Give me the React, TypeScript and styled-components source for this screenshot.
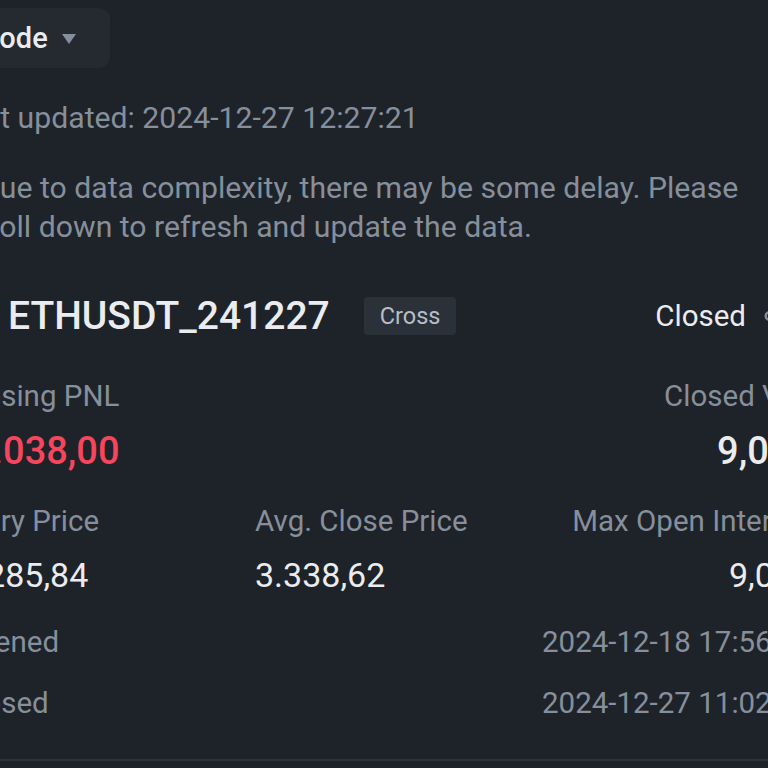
import React from "react";
import styled, { createGlobalStyle } from "styled-components";
import { Share2 } from "lucide-react";

const GlobalStyle = createGlobalStyle`
  html, body {
    margin: 0;
    padding: 0;
    background: #1e2329;
    overflow: hidden;
  }
  body {
    font-family: Roboto, "Noto Sans", "Liberation Sans", sans-serif;
    color: #eaecef;
    width: 768px;
    height: 768px;
  }
`;

const Page = styled.div`
  width: 854px;
  margin-left: -42px;
  padding-top: 8px;
  display: flex;
  flex-direction: column;
`;

const ModeButton = styled.button`
  align-self: flex-start;
  height: 60px;
  display: flex;
  align-items: center;
  gap: 14px;
  margin-left: -20px;
  padding: 0 34px 0 36px;
  border: none;
  border-radius: 12px;
  background: #252a31;
  color: #eaecef;
  font-family: inherit;
  font-size: 29px;
  font-weight: 500;
`;

const Caret = styled.span`
  width: 0;
  height: 0;
  border-left: 7px solid transparent;
  border-right: 7px solid transparent;
  border-top: 10px solid #848e9c;
  margin-top: 2px;
`;

const Updated = styled.div`
  margin-top: 30px;
  margin-left: -6px;
  font-size: 30.2px;
  line-height: 40px;
  color: #868f9b;
  white-space: nowrap;
`;

const Notice = styled.p`
  margin: 30px 0 0;
  font-size: 30.2px;
  line-height: 39px;
  color: #868f9b;
  text-indent: 22px;
  width: 820px;
`;

const TitleRow = styled.div`
  margin-top: 50px;
  height: 40px;
  display: flex;
  align-items: center;
`;

const SideMark = styled.span`
  width: 36px;
  height: 36px;
  margin-right: 14px;
  flex: none;
`;

const Symbol = styled.span`
  font-size: 39px;
  font-weight: 500;
  color: #eaecef;
  line-height: 40px;
`;

const Tag = styled.span`
  margin-left: 34px;
  height: 38px;
  padding: 0 16px;
  display: flex;
  align-items: center;
  background: #2b3139;
  border-radius: 4px;
  font-size: 23.5px;
  color: #b7bdc6;
`;

const Status = styled.span`
  margin-left: auto;
  margin-right: 20px;
  display: flex;
  align-items: center;
  gap: 16px;
  font-size: 29.5px;
  color: #eaecef;
`;

const Grid = styled.div<{ $top: number }>`
  margin-top: ${(p) => p.$top}px;
  display: grid;
  grid-template-columns: repeat(3, 1fr);
  column-gap: 37px;
`;

const Cell = styled.div<{ $align?: "left" | "right" }>`
  display: flex;
  flex-direction: column;
  align-items: ${(p) => (p.$align === "right" ? "flex-end" : "flex-start")};
  white-space: nowrap;
`;

const Label = styled.span`
  font-size: 29.5px;
  line-height: 40px;
  color: #868f9b;
`;

const BigValue = styled.span<{ $red?: boolean }>`
  margin-top: 11px;
  font-size: 38px;
  font-weight: 500;
  line-height: 48px;
  color: ${(p) => (p.$red ? "#f6465d" : "#eaecef")};
`;

const Value = styled.span`
  margin-top: 12px;
  font-size: 34px;
  line-height: 44px;
  color: #eaecef;
`;

const InfoRow = styled.div<{ $top: number }>`
  margin-top: ${(p) => p.$top}px;
  display: flex;
  justify-content: space-between;
  font-size: 29.5px;
  line-height: 40px;
  color: #868f9b;
  white-space: nowrap;
`;

const Divider = styled.div`
  margin-top: 36px;
  height: 2px;
  background: #2b3139;
  width: 900px;
  margin-left: -40px;
`;

export default function App() {
  return (
    <>
      <GlobalStyle />
      <Page>
        <ModeButton>
          Mode
          <Caret />
        </ModeButton>
        <Updated>Last updated: 2024-12-27 12:27:21</Updated>
        <Notice>
          Due to data complexity, there may be some delay. Please scroll down to refresh and update the data.
        </Notice>
        <TitleRow>
          <SideMark />
          <Symbol>ETHUSDT_241227</Symbol>
          <Tag>Cross</Tag>
          <Status>
            Closed
            <Share2 size={30} color="#848e9c" strokeWidth={2} />
          </Status>
        </TitleRow>
        <Grid $top={40}>
          <Cell>
            <Label>Closing PNL</Label>
            <BigValue $red>-1.038,00</BigValue>
          </Cell>
          <Cell />
          <Cell $align="right">
            <Label>Closed Vol.</Label>
            <BigValue>9,025</BigValue>
          </Cell>
        </Grid>
        <Grid $top={26}>
          <Cell>
            <Label>Entry Price</Label>
            <Value>3.285,84</Value>
          </Cell>
          <Cell>
            <Label>Avg. Close Price</Label>
            <Value>3.338,62</Value>
          </Cell>
          <Cell $align="right">
            <Label>Max Open Interest</Label>
            <Value>9,025</Value>
          </Cell>
        </Grid>
        <InfoRow $top={25}>
          <span>Opened</span>
          <span>2024-12-18 17:56:43</span>
        </InfoRow>
        <InfoRow $top={21}>
          <span>Closed</span>
          <span>2024-12-27 11:02:18</span>
        </InfoRow>
        <Divider />
      </Page>
    </>
  );
}
